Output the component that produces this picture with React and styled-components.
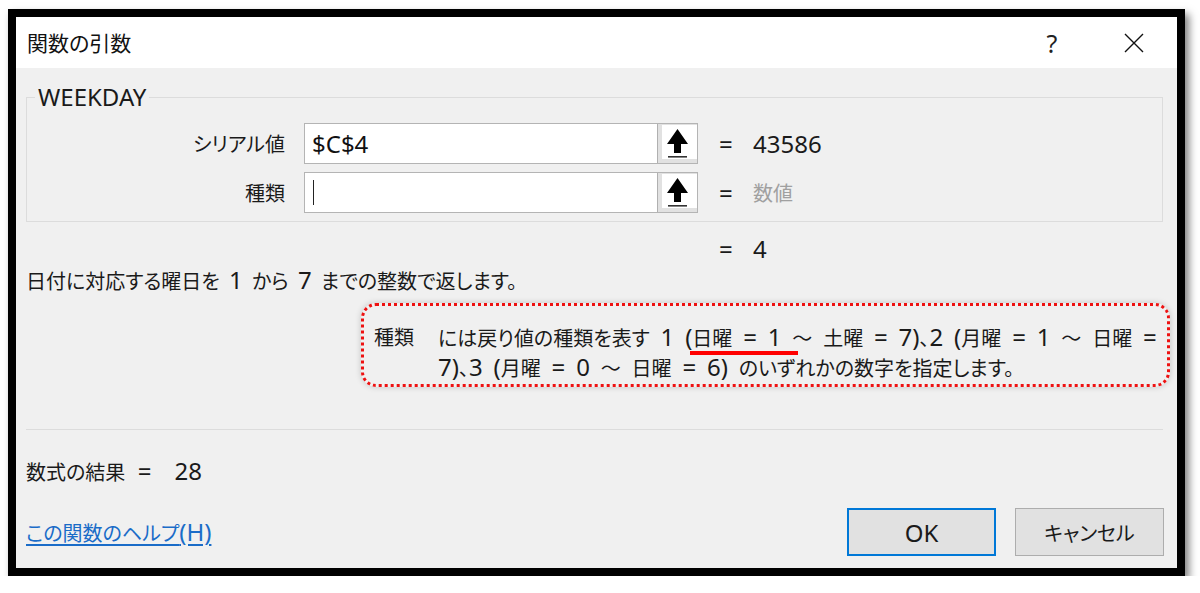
import React from "react";
import styled, { createGlobalStyle } from "styled-components";

const Global = createGlobalStyle`
  html, body { margin: 0; padding: 0; background: #ffffff; }
  body { font-family: "Noto Sans CJK JP", sans-serif; }
  #root { padding: 9px 0 0 8px; }
`;

const Frame = styled.div`
  width: 1177px;
  height: 567px;
  box-sizing: border-box;
  border: 8px solid #000;
  box-shadow: 4px 5px 8px rgba(0, 0, 0, 0.5);
  display: flex;
  flex-direction: column;
  background: #f0f0f0;
  font-family: "Noto Sans CJK JP", sans-serif;
  font-size: 20px;
  font-feature-settings: "palt";
  color: #1a1a1a;
`;

const TitleBar = styled.div`
  height: 51px;
  flex: none;
  background: #ffffff;
  display: flex;
  align-items: center;
  padding-left: 11px;
`;

const Title = styled.div`
  flex: 1;
  font-size: 21px;
  color: #111;
  line-height: 1;
`;

const CaptionButton = styled.div`
  width: 46px;
  height: 51px;
  display: flex;
  align-items: center;
  justify-content: center;
  margin-right: ${(p) => p.$mr || 0}px;
  font-family: "Noto Sans", sans-serif;
  font-size: 25px;
  color: #222;
`;

const Body = styled.div`
  flex: 1;
  display: flex;
  flex-direction: column;
  padding: 15px 14px 12px 10px;
`;

const Group = styled.fieldset`
  margin: 0;
  padding: 12px 0 8px 0;
  border: 1px solid #dcdcdc;
  min-width: 0;
`;

const Legend = styled.legend`
  margin-left: 8px;
  padding: 0 3px;
  font-family: "Noto Sans", sans-serif;
  font-size: 24px;
  line-height: 28px;
  color: #1a1a1a;
`;

const Fields = styled.div`
  display: grid;
  grid-template-columns: 258px 394px 17px 1fr;
  column-gap: 19px;
  row-gap: 8px;
  align-items: center;
  padding-left: ${(p) => p.$pl || 0}px;
  line-height: 29px;
`;

const FieldLabel = styled.div`
  text-align: right;
  font-size: 20px;
`;

const FieldBox = styled.div`
  height: 41px;
  box-sizing: border-box;
  border: 1px solid #b4b4b4;
  background: #fff;
  display: flex;
`;

const FieldInput = styled.div`
  flex: 1;
  display: flex;
  align-items: center;
  padding-left: 7px;
  font-family: "Noto Sans", sans-serif;
  font-size: 24px;
  color: #111;
`;

const Caret = styled.span`
  display: block;
  width: 1px;
  height: 25px;
  background: #222;
  margin-left: 1px;
`;

const RefButton = styled.div`
  width: 40px;
  flex: none;
  box-sizing: border-box;
  border-left: 1px solid #b0b0b0;
  background: #e1e1e1;
  padding: 1px 0 4px 4px;
  display: flex;
`;

const RefIcon = styled.div`
  flex: 1;
  background: #fff;
  display: flex;
`;

const Eq = styled.div`
  font-family: "Noto Sans", sans-serif;
  font-size: 24px;
  padding-left: 2px;
  color: #1a1a1a;
`;

const Value = styled.div`
  font-family: ${(p) => (p.$muted ? '"Noto Sans CJK JP", sans-serif' : '"Noto Sans", sans-serif')};
  font-size: ${(p) => (p.$muted ? 20 : 24)}px;
  color: ${(p) => (p.$muted ? "#a0a0a0" : "#1a1a1a")};
`;

const ResultRow = styled(Fields)`
  margin-top: 12px;
`;

const L = styled.span`
  font-family: "Noto Sans", sans-serif;
  font-size: 24px;
`;

const Description = styled.div`
  margin-top: 2px;
  line-height: 29px;
  white-space: nowrap;
  word-spacing: 3px;
`;

const Note = styled.div`
  margin: 8px -7px 0 335px;
  box-sizing: border-box;
  height: 84px;
  border: 3px dotted #ee1111;
  border-radius: 15px;
  box-shadow: 0 0 6px rgba(0, 0, 0, 0.18);
  padding: 16px 4px 4px 10px;
  display: grid;
  grid-template-columns: auto 1fr;
  column-gap: 24px;
  line-height: 29px;
  white-space: nowrap;
  word-spacing: 4.6px;
`;

const Marked = styled.span`
  position: relative;
  &::after {
    content: "";
    position: absolute;
    left: -2px;
    right: -16px;
    bottom: -3px;
    height: 4px;
    background: #ff0000;
  }
`;

const Separator = styled.div`
  margin-top: 42px;
  height: 1px;
  background: #dcdcdc;
`;

const Formula = styled.div`
  margin-top: 26px;
  line-height: 29px;
  white-space: pre;
`;

const FormulaValue = styled(L)`
  margin-left: 23px;
`;

const Footer = styled.div`
  margin-top: auto;
  margin-right: -1px;
  display: flex;
  align-items: center;
  gap: 19px;
`;

const HelpLink = styled.a`
  flex: 1;
  color: #1a6cc8;
  text-decoration: underline;
  text-underline-offset: 3px;
  cursor: pointer;
  line-height: 29px;
`;

const Button = styled.div`
  width: 149px;
  height: 48px;
  box-sizing: border-box;
  background: #e1e1e1;
  border: ${(p) => (p.$primary ? "2px solid #0078d7" : "1px solid #adadad")};
  display: flex;
  align-items: center;
  justify-content: center;
  font-family: ${(p) => (p.$latin ? '"Noto Sans", sans-serif' : '"Noto Sans CJK JP", sans-serif')};
  font-size: ${(p) => (p.$latin ? 24 : 20)}px;
  color: #1a1a1a;
`;

const ArrowIcon = () => (
  <svg width="35" height="34" viewBox="0 0 35 34">
    <path d="M15.5 4 L26 19 L19 19 L19 28 L12 28 L12 19 L5 19 Z" fill="#000" />
    <rect x="6" y="31" width="19" height="1.6" fill="#333" />
  </svg>
);

const CloseIcon = () => (
  <svg width="20" height="20" viewBox="0 0 20 20">
    <path d="M1 1 L19 19 M19 1 L1 19" stroke="#111" strokeWidth="1.4" fill="none" />
  </svg>
);

function RefField({ children }) {
  return (
    <FieldBox>
      <FieldInput>{children}</FieldInput>
      <RefButton>
        <RefIcon>
          <ArrowIcon />
        </RefIcon>
      </RefButton>
    </FieldBox>
  );
}

export default function App() {
  return (
    <>
      <Global />
      <Frame>
        <TitleBar>
          <Title>関数の引数</Title>
          <CaptionButton $mr={36}>?</CaptionButton>
          <CaptionButton $mr={20}>
            <CloseIcon />
          </CaptionButton>
        </TitleBar>
        <Body>
          <Group>
            <Legend>WEEKDAY</Legend>
            <Fields>
              <FieldLabel>シリアル値</FieldLabel>
              <RefField>$C$4</RefField>
              <Eq>=</Eq>
              <Value>43586</Value>
              <FieldLabel>種類</FieldLabel>
              <RefField>
                <Caret />
              </RefField>
              <Eq>=</Eq>
              <Value $muted>数値</Value>
            </Fields>
          </Group>
          <ResultRow $pl={1}>
            <span />
            <span />
            <Eq>=</Eq>
            <Value>4</Value>
          </ResultRow>
          <Description>
            日付に対応する曜日を<L> 1 </L>から<L> 7 </L>までの整数で返します。
          </Description>
          <Note>
            <div>種類</div>
            <div>
              には戻り値の種類を表す<L> 1 (</L>
              <Marked>
                日曜<L> = 1</L>
              </Marked>
              <L> </L>〜<L> </L>土曜<L> = 7)</L>、<L>2 (</L>月曜<L> = 1 </L>〜<L> </L>日曜<L> =</L>
              <br />
              <L>7)</L>、<L>3 (</L>月曜<L> = 0 </L>〜<L> </L>日曜<L> = 6) </L>のいずれかの数字を指定します。
            </div>
          </Note>
          <Separator />
          <Formula>
            数式の結果<L>{"  ="}</L>
            <FormulaValue>28</FormulaValue>
          </Formula>
          <Footer>
            <HelpLink>
              この関数のヘルプ<L>(H)</L>
            </HelpLink>
            <Button $primary $latin>
              OK
            </Button>
            <Button>キャンセル</Button>
          </Footer>
        </Body>
      </Frame>
    </>
  );
}
